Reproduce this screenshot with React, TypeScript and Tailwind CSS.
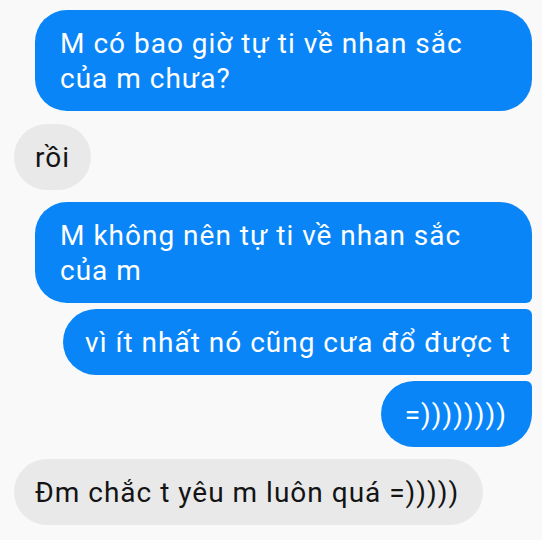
const font = { fontFamily: "Roboto, 'Noto Sans', sans-serif" };

type Msg = {
  side: "me" | "them";
  lines: string[];
  className: string;
};

const messages: Msg[] = [
  {
    side: "me",
    lines: ["M có bao giờ tự ti về nhan sắc", "của m chưa?"],
    className: "mt-[10px] w-[497px] rounded-[32px] pl-[25px]"
  },
  {
    side: "them",
    lines: ["rồi"],
    className: "mt-[13px] rounded-[34px] pl-[21px] pr-[21px]"
  },
  {
    side: "me",
    lines: ["M không nên tự ti về nhan sắc", "của m"],
    className: "mt-[12px] w-[497px] rounded-[32px] rounded-br-[6px] pl-[25px]"
  },
  {
    side: "me",
    lines: ["vì ít nhất nó cũng cưa đổ được t"],
    className: "mt-[6px] rounded-l-[33px] rounded-r-[6px] pl-[22px] pr-[21px]"
  },
  {
    side: "me",
    lines: ["=))))))))"],
    className: "mt-[6px] rounded-[34px] rounded-tr-[6px] pl-[24px] pr-[25px]"
  },
  {
    side: "them",
    lines: ["Đm chắc t yêu m luôn quá =)))))"],
    className: "mt-[12px] rounded-[34px] pl-[21px] pr-[24px]"
  }
];

function Bubble({ msg }: { msg: Msg }) {
  const mine = msg.side === "me";
  return (
    <div className={mine ? "flex justify-end pr-[10px]" : "flex justify-start pl-[14px]"}>
      <div
        className={`${msg.className} pt-4 pb-[15px] text-[28px] leading-[35px] tracking-[1px] ${
          mine ? "bg-[#0985f8] text-white" : "bg-[#e9e9e9] text-[#141414]"
        }`}
      >
        {msg.lines.map((line, i) => (
          <div key={i} className="whitespace-nowrap">
            {line}
          </div>
        ))}
      </div>
    </div>
  );
}

export default function App() {
  return (
    <div className="h-[540px] w-[542px] overflow-hidden bg-[#f9f9f9]" style={font}>
      {messages.map((m, i) => (
        <Bubble key={i} msg={m} />
      ))}
    </div>
  );
}
